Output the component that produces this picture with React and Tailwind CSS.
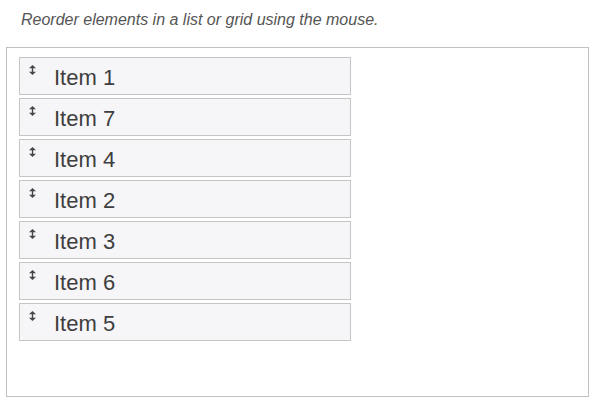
import React from "react";

const items = ["Item 1", "Item 7", "Item 4", "Item 2", "Item 3", "Item 6", "Item 5"];

function Arrow() {
  return (
    <svg width="7" height="10" viewBox="0 0 7 10" className="block">
      <path d="M3.5 0 L7 3.2 L0 3.2 Z" fill="#454545" />
      <rect x="2.8" y="3" width="1.4" height="4" fill="#454545" />
      <path d="M3.5 10 L7 6.8 L0 6.8 Z" fill="#454545" />
    </svg>
  );
}

export default function App() {
  return (
    <div className="w-[594px] h-[404px] bg-white font-['Liberation_Sans',Arial,sans-serif]">
      <div className="pt-[11px] pl-[21px] text-[16px] leading-[18px] italic text-[#555]">
        Reorder elements in a list or grid using the mouse.
      </div>
      <div className="mt-[18px] ml-[6px] w-[583px] h-[350px] border border-[#c0c0c0] pt-[9px] pl-[12px]">
        <ul className="flex flex-col gap-[3px] w-[332px]">
          {items.map((it) => (
            <li
              key={it}
              className="h-[38px] border border-[#c5c5c5] bg-[#f6f5f7] flex items-start"
            >
              <div className="pl-[9px] pt-[7px] w-[34px]">
                <Arrow />
              </div>
              <span className="text-[22px] leading-[22px] pt-[9px] text-[#3e3e3e]">{it}</span>
            </li>
          ))}
        </ul>
      </div>
    </div>
  );
}
